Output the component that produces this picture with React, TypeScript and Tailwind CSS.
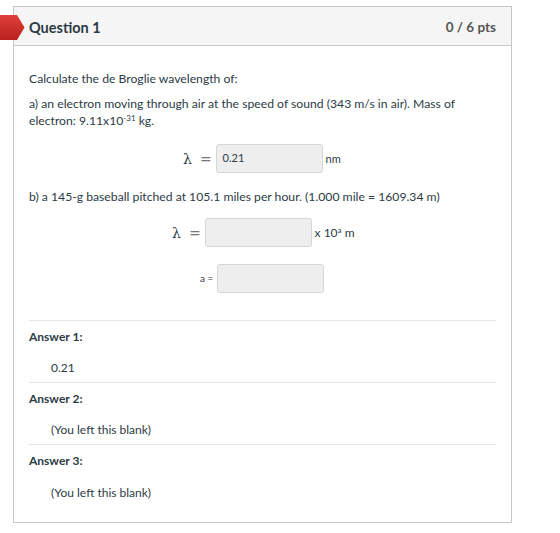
import React from "react";

function Field({ value }: { value?: string }) {
  return (
    <div className="w-[107px] h-[29px] bg-[#eeeeee] border border-[#d6d6d6] rounded-[3px] px-[6px] pt-[5px] text-[11px] leading-[15px] text-[#2d3b45]">
      {value}
    </div>
  );
}

function Lambda() {
  return (
    <span className="font-['DejaVu_Serif',serif] text-[14px] leading-[20px] text-[#2d3b45] flex items-center mr-[4px]">
      <span>λ</span>
      <span className="ml-[8px] text-[#777]">=</span>
    </span>
  );
}

function Answer({ label, value, last }: { label: string; value: string; last?: boolean }) {
  return (
    <div className={last ? "pt-[7px] pb-[21px]" : "pt-[7px] pb-[6px] border-b border-[#e6e6e6]"}>
      <div className="font-bold text-[12px] leading-[17px]">{label}</div>
      <div className={last ? "pl-[22px] mt-[15px] text-[12px] leading-[17px]" : "pl-[22px] mt-[14px] text-[12px] leading-[17px]"}>{value}</div>
    </div>
  );
}

export default function App() {
  return (
    <div className="relative w-[560px] h-[533px] bg-white font-['Lato','Noto_Sans',sans-serif] text-[#2d3b45] pt-[6px] pl-[13px]">
      <div className="absolute left-0 top-[15px] w-[25px] h-[25px]">
        <svg width="25" height="25" viewBox="0 0 25 25">
          <defs>
            <linearGradient id="flag" x1="0" y1="0" x2="0" y2="1">
              <stop offset="0" stopColor="#e2403b" />
              <stop offset="1" stopColor="#b8211f" />
            </linearGradient>
          </defs>
          <path d="M0 0 H17 L24.5 12.5 L17 25 H0 Z" fill="url(#flag)" />
        </svg>
      </div>
      <div className="w-[499px] border border-[#c7c7c7]">
        <div className="h-[39px] bg-[#f5f5f5] border-b border-[#c7c7c7] flex items-center justify-between pl-[15px] pr-[15px] pt-[3px]">
          <span className="font-bold text-[14.5px]">Question 1</span>
          <span className="font-bold text-[13.5px] text-[#555]">0 / 6 pts</span>
        </div>
        <div className="px-[15px] pt-[24px] text-[12.2px] leading-[17px]">
          <p>Calculate the de Broglie wavelength of:</p>
          <p className="mt-[8px]">
            a) an electron moving through air at the speed of sound (343 m/s in air). Mass of electron: 9.11x10
            <sup className="text-[8px]">-31</sup> kg.
          </p>
          <div className="flex items-center mt-[15px] ml-[154px]">
            <Lambda />
            <Field value="0.21" />
            <span className="ml-[3px] text-[11px]">nm</span>
          </div>
          <p className="mt-[15px]">b) a 145-g baseball pitched at 105.1 miles per hour. (1.000 mile = 1609.34 m)</p>
          <div className="flex items-center mt-[13px] ml-[143px]">
            <Lambda />
            <Field />
            <span className="ml-[3px] text-[12px]">
              x 10<sup className="text-[8px]">a</sup> m
            </span>
          </div>
          <div className="flex items-center mt-[17px] ml-[171px]">
            <span className="text-[10px] mr-[4px]">a =</span>
            <Field />
          </div>
          <div className="mt-[27px] border-t border-[#e6e6e6]">
            <Answer label="Answer 1:" value="0.21" />
            <Answer label="Answer 2:" value="(You left this blank)" />
            <Answer label="Answer 3:" value="(You left this blank)" last />
          </div>
        </div>
      </div>
    </div>
  );
}
